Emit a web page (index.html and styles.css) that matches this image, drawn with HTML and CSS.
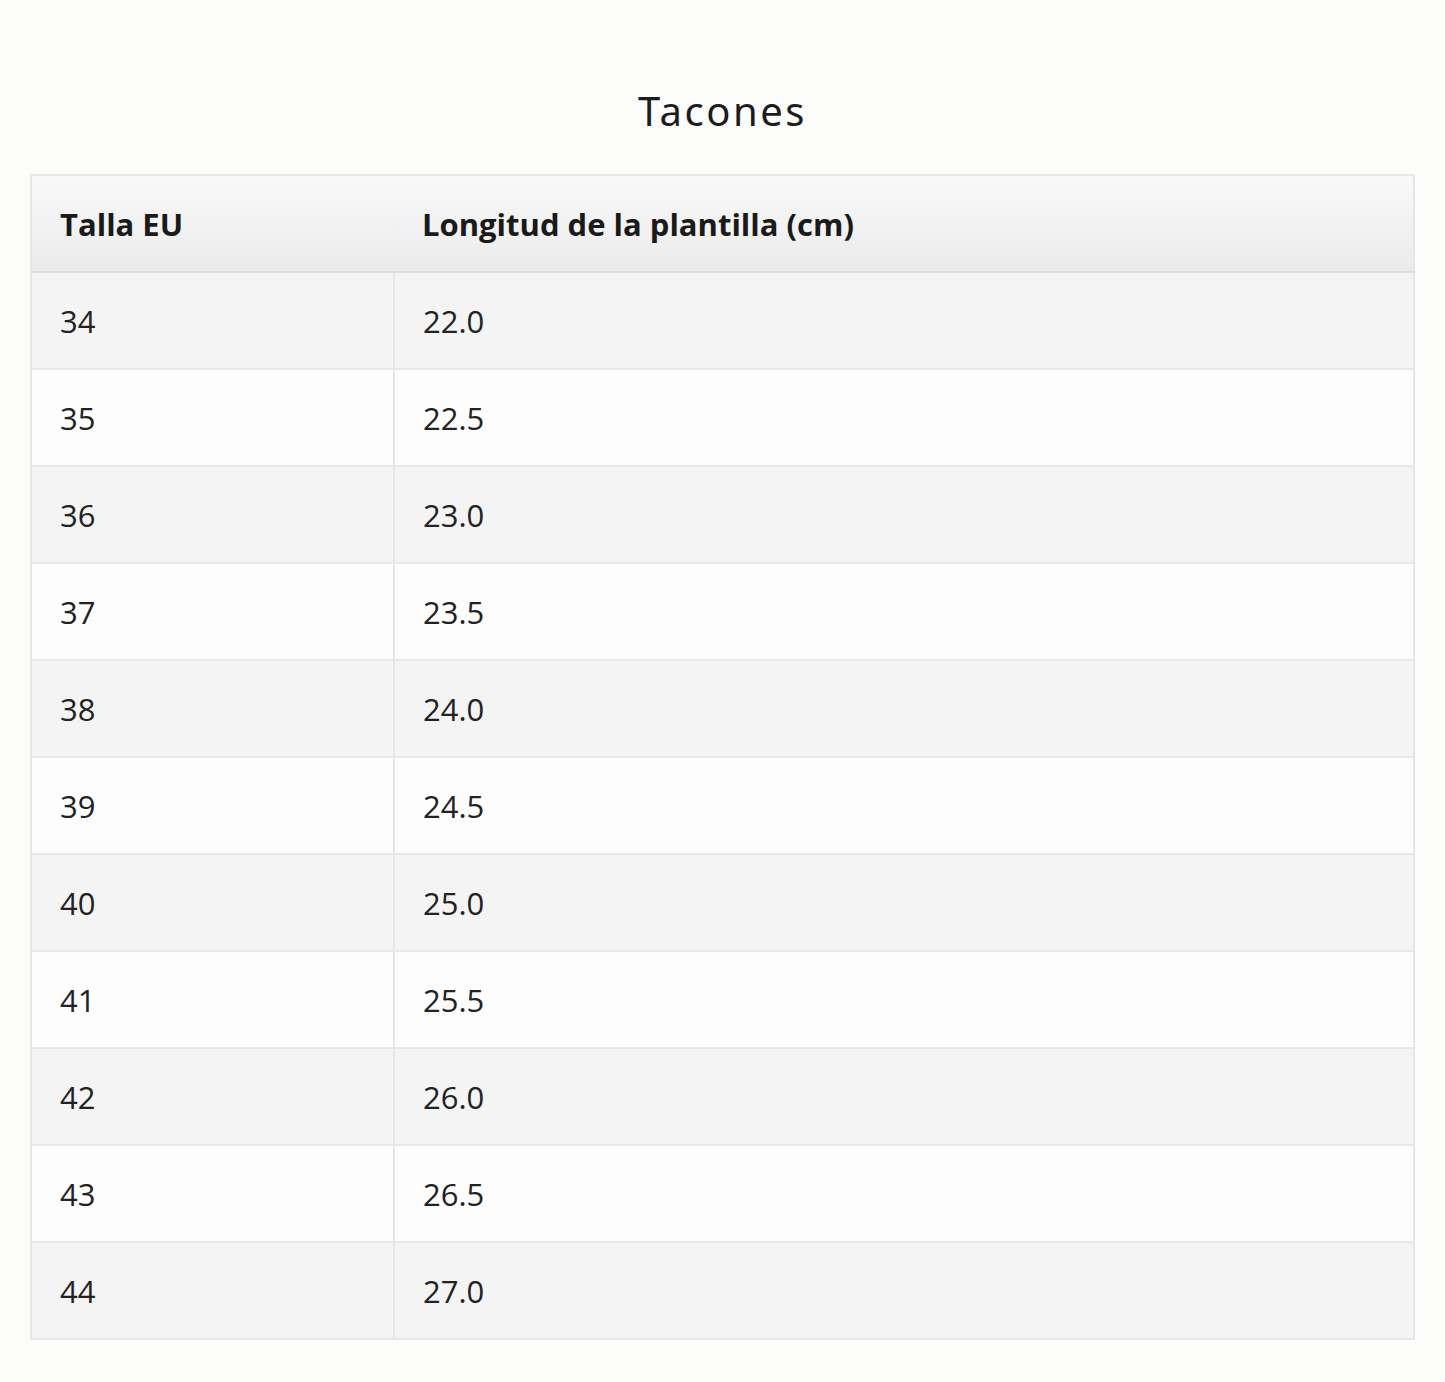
FILE: index.html
```html
<!DOCTYPE html>
<html lang="es">
<head>
<meta charset="utf-8">
<title>Tacones</title>
<link rel="stylesheet" href="styles.css">
</head>
<body>
<main class="page">
  <h2 class="title">Tacones</h2>
  <table class="sizes">
    <thead>
      <tr><th class="col-size">Talla EU</th><th>Longitud de la plantilla (cm)</th></tr>
    </thead>
    <tbody>
      <tr><td>34</td><td>22.0</td></tr>
      <tr><td>35</td><td>22.5</td></tr>
      <tr><td>36</td><td>23.0</td></tr>
      <tr><td>37</td><td>23.5</td></tr>
      <tr><td>38</td><td>24.0</td></tr>
      <tr><td>39</td><td>24.5</td></tr>
      <tr><td>40</td><td>25.0</td></tr>
      <tr><td>41</td><td>25.5</td></tr>
      <tr><td>42</td><td>26.0</td></tr>
      <tr><td>43</td><td>26.5</td></tr>
      <tr><td>44</td><td>27.0</td></tr>
    </tbody>
  </table>
</main>
</body>
</html>
```
FILE: styles.css
```css
html, body {
  margin: 0;
  padding: 0;
  background: #fcfcfb;
}
body {
  font-family: "Open Sans", "Noto Sans", "Liberation Sans", sans-serif;
  color: #222;
}
.page {
  padding: 84px 30px 40px;
}
.title {
  margin: 0 0 36px;
  text-align: center;
  font-family: "Noto Sans", "Open Sans", sans-serif;
  font-weight: 400;
  font-size: 40px;
  line-height: 54px;
  letter-spacing: 2.5px;
  color: #1c1c1c;
}
.sizes {
  width: 100%;
  border-collapse: collapse;
  border: 2px solid #e6e6e6;
  font-size: 31px;
}
.sizes th,
.sizes td {
  height: 95px;
  padding: 0 28px;
  text-align: left;
  vertical-align: middle;
  border: 2px solid #e8e8e8;
  border-left: none;
  border-right: none;
}
.sizes th {
  font-weight: 700;
  font-size: 31px;
  color: #1a1a1a;
  background: linear-gradient(#f9f9f9, #ebebeb);
  border-bottom: 2px solid #dedede;
}
.sizes td:first-child {
  border-right: 2px solid #e6e6e6;
}
.col-size {
  width: 306px;
}
.sizes tbody tr:nth-child(odd) td {
  background: #f4f4f4;
}
.sizes tbody tr:nth-child(even) td {
  background: #fdfdfd;
}
```
